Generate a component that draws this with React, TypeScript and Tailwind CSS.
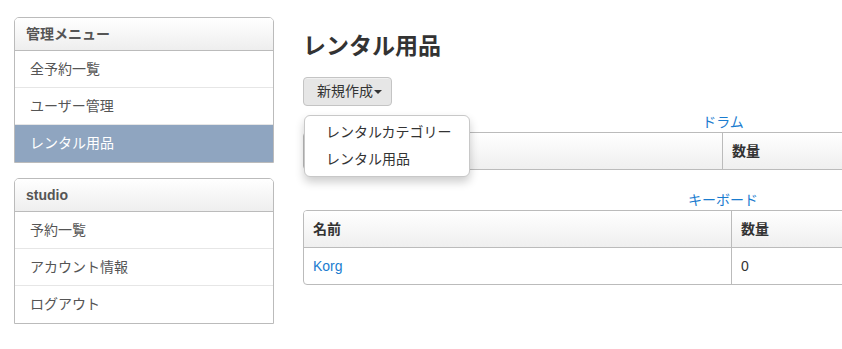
import React from "react";

const jp = { fontFamily: '"Liberation Sans", "Noto Sans CJK JP", sans-serif' };

function Panel({ title, items, active }: { title: string; items: string[]; active?: string }) {
  return (
    <div className="border border-[#bbbbbb] rounded-t-[5px] overflow-hidden bg-white">
      <div className="h-[33px] border-b border-[#bbbbbb] bg-linear-to-b from-white to-[#eeeeee] flex items-center pl-[11px] text-[14px] font-bold text-[#555555]">
        {title}
      </div>
      {items.map((it, i) => (
        <div
          key={it}
          className={
            "h-[37px] flex items-center pl-[15px] text-[14px] " +
            (i < items.length - 1 ? "border-b border-[#e6e6e6] " : "") +
            (it === active ? "bg-[#8fa5c0] text-white" : "text-[#555555]")
          }
        >
          {it}
        </div>
      ))}
    </div>
  );
}

function Table({ caption, col1, rows, showName = true }: { caption: string; col1: string; rows: [string, string][]; showName?: boolean }) {
  return (
    <div className="w-[840px]">
      <div className="text-center text-[14px] leading-[20px] text-[#1a7ccf]">{caption}</div>
      <div className="border border-[#bbbbbb] rounded-[4px] overflow-hidden">
        <div className="flex h-[36px] bg-linear-to-b from-white to-[#efefef]">
          <div className={col1 + " border-r border-[#bbbbbb] px-[9px] flex items-center text-[14px] font-bold text-[#333333]"}>{showName ? "名前" : ""}</div>
          <div className="flex-1 px-[9px] flex items-center text-[14px] font-bold text-[#333333]">数量</div>
        </div>
        {rows.map((r) => (
          <div key={r[0]} className="flex h-[37px] border-t border-[#bbbbbb]">
            <div className={col1 + " border-r border-[#bbbbbb] px-[9px] flex items-center text-[14px] text-[#1a7ccf]"}>{r[0]}</div>
            <div className="flex-1 px-[9px] flex items-center text-[14px] text-[#333333]">{r[1]}</div>
          </div>
        ))}
      </div>
    </div>
  );
}

export default function App() {
  return (
    <div style={jp} className="w-[842px] h-[349px] overflow-hidden bg-white flex">
      <div className="shrink-0 w-[260px] ml-[14px] pt-[17px] flex flex-col gap-[15px]">
        <Panel title="管理メニュー" items={["全予約一覧", "ユーザー管理", "レンタル用品"]} active="レンタル用品" />
        <Panel title="studio" items={["予約一覧", "アカウント情報", "ログアウト"]} />
      </div>
      <div className="shrink-0 w-[840px] ml-[29px] pt-[28px]">
        <h1 className="text-[23px] leading-[36px] font-bold text-[#333333]">レンタル用品</h1>
        <div className="relative mt-[13px] mb-[6px] h-[29px]">
          <button className="h-[29px] w-[89px] border border-[#c4c4c4] rounded-[4px] bg-[#e6e6e6] shadow-[inset_0_1px_0_rgba(255,255,255,0.4)] flex items-center pl-[13px] text-[14px] text-[#333333]">
            <span>新規作成</span>
            <span className="ml-[1px] mt-[1px] w-0 h-0 border-l-[4px] border-r-[4px] border-t-[4px] border-l-transparent border-r-transparent border-t-[#333333]" />
          </button>
          <div className="absolute z-10 left-[1px] top-[38px] w-[166px] bg-white border border-[#c8c8c8] rounded-[6px] shadow-[0_5px_10px_rgba(0,0,0,0.2)] py-[3px]">
            <div className="h-[27px] flex items-center pl-[21px] text-[14px] text-[#333333]">レンタルカテゴリー</div>
            <div className="h-[27px] flex items-center pl-[21px] text-[14px] text-[#333333]">レンタル用品</div>
          </div>
        </div>
        <Table caption="ドラム" col1="w-[419px]" rows={[]} showName={false} />
        <div className="h-[20px]" />
        <Table caption="キーボード" col1="w-[428px]" rows={[["Korg", "0"]]} />
      </div>
    </div>
  );
}
